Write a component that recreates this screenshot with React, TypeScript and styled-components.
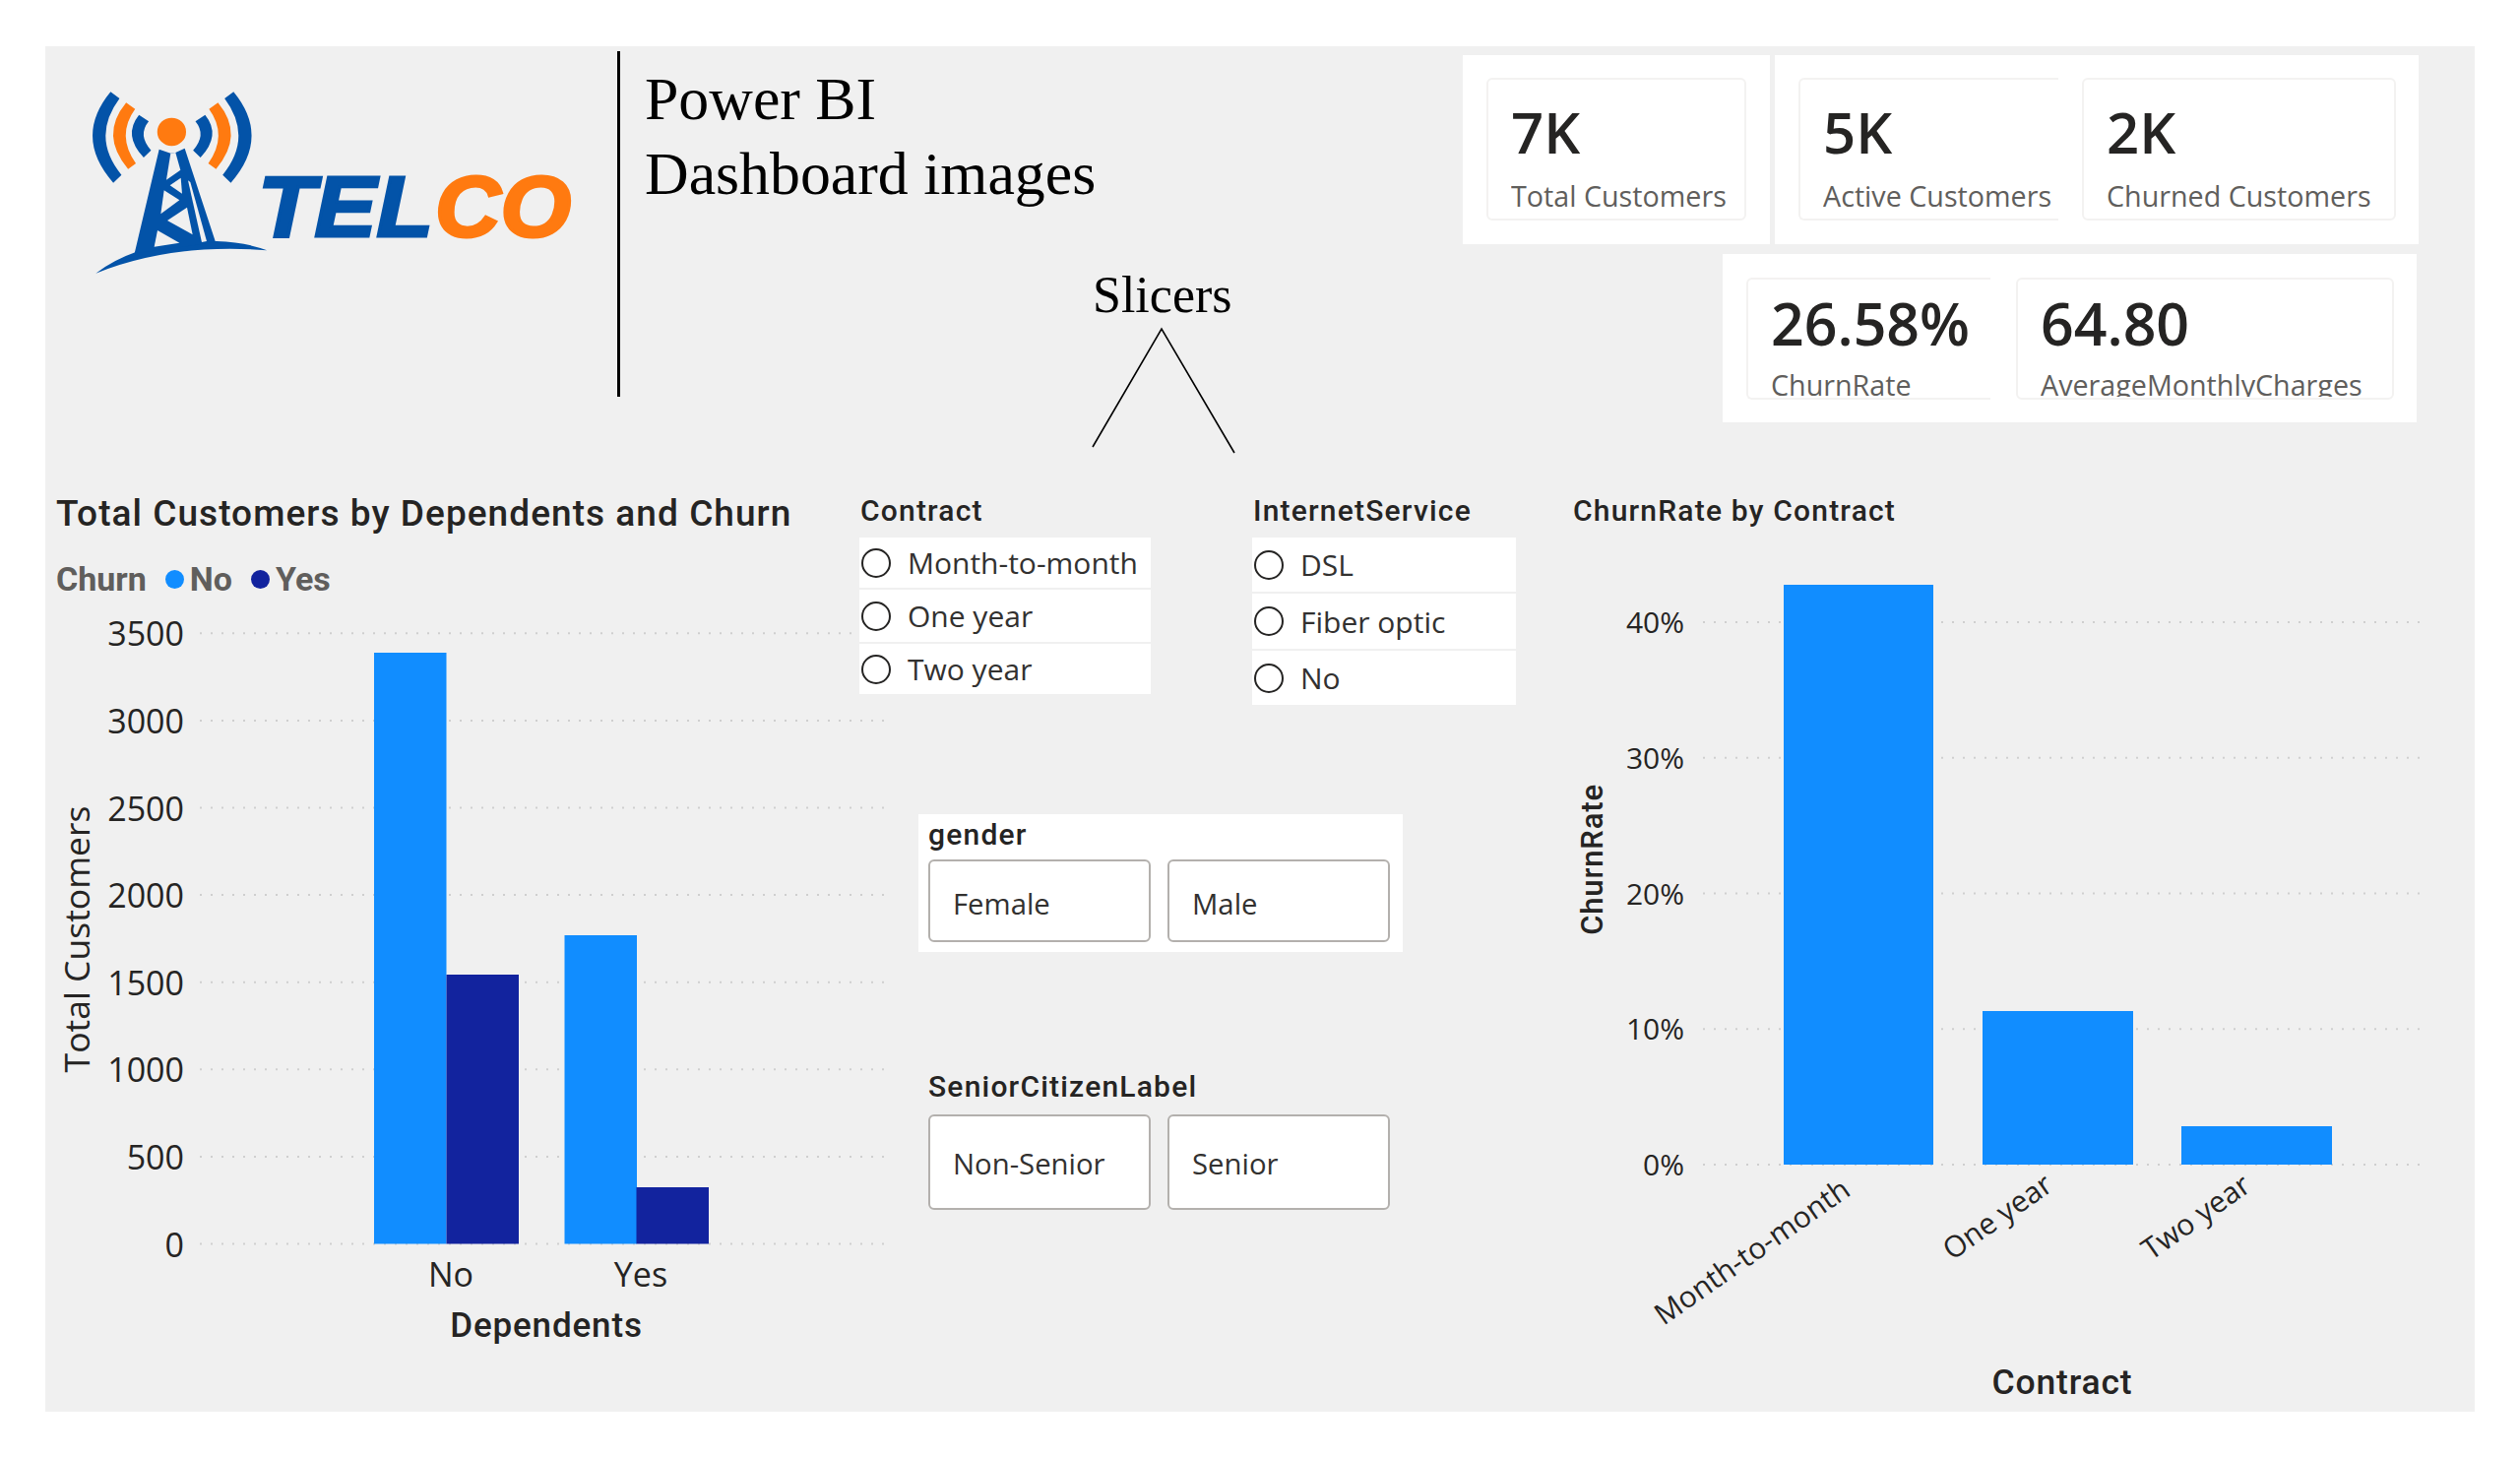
import React from "react";
import styled, { createGlobalStyle } from "styled-components";

const Global = createGlobalStyle`
  html, body { margin: 0; padding: 0; background: #ffffff; }
  #root { width: 2560px; height: 1480px; overflow: hidden; }
`;

const UI = `"Open Sans", "Noto Sans", sans-serif`;
const DIN = `Roboto, "Liberation Sans", sans-serif`;
const SERIF = `"Liberation Serif", serif`;

const Canvas = styled.main`
  width: 2468px;
  height: 1387px;
  margin: 47px 46px 0;
  background: #f0f0f0;
  display: flex;
  flex-direction: column;
`;
const TopRow = styled.header`
  height: 433px;
  display: flex;
  flex: none;
`;
const LogoSvg = styled.svg`
  display: block;
  width: 500px;
  height: 200px;
  margin: 41px 0 0 44px;
  flex: none;
`;
const Divider = styled.div`
  width: 3px;
  height: 351px;
  margin: 5px 0 0 37px;
  background: #000;
  flex: none;
`;
const TitleColumn = styled.div`
  width: 831px;
  margin-left: 25px;
  padding-top: 15px;
  flex: none;
  box-sizing: border-box;
  display: flex;
  flex-direction: column;
  font-family: ${SERIF};
  color: #000;
`;
const Headline = styled.h1`
  margin: 0;
  font-size: 61.8px;
  line-height: 76px;
  font-weight: 400;
`;
const SlicerNote = styled.div`
  margin: 56px 0 0 449px;
  width: 155px;
  display: flex;
  flex-direction: column;
  align-items: flex-start;
`;
const SlicerWord = styled.div`
  font-size: 52px;
  line-height: 60px;
  margin-left: 6px;
`;
const Fork = styled.svg`
  display: block;
  width: 155px;
  height: 134px;
`;

const KpiColumn = styled.div`
  padding-top: 9px;
  display: flex;
  flex-direction: column;
  gap: 10px;
`;
const KpiRow = styled.div`
  display: flex;
  gap: 5px;
`;
const KpiPanel = styled.section<{ $w: number; $h: number; $left?: number; $pad: number; $gap: number; $top: number }>`
  width: ${(p) => p.$w}px;
  height: ${(p) => p.$h}px;
  margin-left: ${(p) => p.$left ?? 0}px;
  background: #fff;
  box-sizing: border-box;
  padding: ${(p) => p.$top}px 0 0 ${(p) => p.$pad}px;
  display: flex;
  gap: ${(p) => p.$gap}px;
  align-items: flex-start;
`;
const Card = styled.div<{ $w: number; $h: number; $open?: boolean; $top: number }>`
  width: ${(p) => p.$w}px;
  height: ${(p) => p.$h}px;
  box-sizing: border-box;
  flex: none;
  padding: ${(p) => p.$top}px 0 0 23px;
  border: 2px solid #f3f2f1;
  border-right: ${(p) => (p.$open ? "none" : "2px solid #f3f2f1")};
  border-radius: ${(p) => (p.$open ? "6px 0 0 6px" : "6px")};
  overflow: hidden;
  white-space: nowrap;
`;
const Value = styled.div<{ $size: number }>`
  font-family: ${UI};
  font-weight: 600;
  font-size: ${(p) => p.$size}px;
  line-height: 64px;
  color: #252423;
`;
const KpiLabel = styled.div<{ $gap: number; $clip?: boolean }>`
  font-family: ${UI};
  font-size: 28.7px;
  line-height: 40px;
  margin-top: ${(p) => p.$gap}px;
  color: #605e5c;
  height: ${(p) => (p.$clip ? "32px" : "40px")};
  overflow: hidden;
`;

const BottomRow = styled.div`
  flex: 1;
  display: flex;
  min-height: 0;
`;
const ChartColumn = styled.section`
  width: 827px;
  flex: none;
  padding-top: 19px;
  box-sizing: border-box;
`;
const ChartTitle = styled.h2`
  margin: 0 0 0 11px;
  font-family: ${DIN};
  font-size: 37px;
  line-height: 46px;
  font-weight: 500;
  letter-spacing: 1.05px;
  color: #252423;
  white-space: nowrap;
`;
const Legend = styled.div`
  margin: 23px 0 12px 11px;
  height: 40px;
  display: flex;
  align-items: center;
  font-family: ${DIN};
  font-weight: 700;
  font-size: 34px;
  color: #605e5c;
`;
const LegendName = styled.span`
  margin-right: 19px;
`;
const LegendDot = styled.span<{ $color: string }>`
  width: 19px;
  height: 19px;
  border-radius: 50%;
  background: ${(p) => p.$color};
  margin-right: 6px;
  flex: none;
`;
const LegendItem = styled.span`
  margin-right: 19px;
`;
const ChartSvg = styled.svg<{ $w: number; $h: number }>`
  display: block;
  width: ${(p) => p.$w}px;
  height: ${(p) => p.$h}px;
  overflow: visible;
  text { font-family: ${UI}; fill: #252423; }
  .din { font-family: ${DIN}; font-weight: 500; letter-spacing: 0.85px; }
`;

const SlicerColumn = styled.section`
  width: 667px;
  flex: none;
  position: relative;
  padding-top: 19px;
  box-sizing: border-box;
`;
const ListRow = styled.div`
  display: flex;
  gap: 103px;
`;
const ListSlicer = styled.div<{ $w: number }>`
  width: ${(p) => p.$w}px;
`;
const SlicerTitle = styled.div`
  font-family: ${DIN};
  font-size: 30px;
  line-height: 40px;
  font-weight: 500;
  letter-spacing: 1.2px;
  color: #252423;
  margin: 0 0 7px 1px;
`;
const OptionList = styled.div`
  display: flex;
  flex-direction: column;
  gap: 2px;
`;
const Option = styled.div<{ $h: number }>`
  height: ${(p) => p.$h}px;
  background: #fff;
  display: flex;
  align-items: center;
  padding-left: 2px;
  font-family: ${UI};
  font-size: 30px;
  color: #323130;
`;
const Radio = styled.span`
  width: 26px;
  height: 26px;
  border: 2px solid #252423;
  border-radius: 50%;
  margin-right: 17px;
  flex: none;
`;
const GenderPanel = styled.div`
  margin: 111px 0 0 60px;
  width: 492px;
  height: 140px;
  background: #fff;
  box-sizing: border-box;
  padding: 3px 0 0 10px;
`;
const SeniorBlock = styled.div`
  margin: 119px 0 0 70px;
`;
const ButtonTitle = styled.div<{ $gap: number }>`
  font-family: ${DIN};
  font-size: 30px;
  line-height: 36px;
  font-weight: 500;
  letter-spacing: 1.2px;
  color: #252423;
  margin-bottom: ${(p) => p.$gap}px;
`;
const ButtonRow = styled.div`
  display: flex;
  gap: 17px;
`;
const ToggleButton = styled.div<{ $h: number; $drop: number }>`
  width: 226px;
  height: ${(p) => p.$h}px;
  box-sizing: border-box;
  background: #fff;
  border: 2px solid #b3b0ad;
  border-radius: 6px;
  display: flex;
  align-items: center;
  padding: ${(p) => p.$drop}px 0 0 23px;
  font-family: ${UI};
  font-size: 29.3px;
  color: #323130;
`;

const ChurnColumn = styled.section`
  flex: 1;
  min-width: 0;
  padding-top: 19px;
  box-sizing: border-box;
`;
const ChurnTitle = styled.h2`
  margin: 0 0 1px 58px;
  font-family: ${DIN};
  font-size: 30px;
  line-height: 40px;
  font-weight: 500;
  letter-spacing: 1.2px;
  color: #252423;
`;

const GRID = "#cfcfcf";
const BLUE = "#118dff";
const NAVY = "#12239e";

function Logo() {
  const arcs = (
    <>
      <path fill="#0353a8" d="M183 160 Q87 298 190 437 L211 413 Q132 298 206 180 Z" />
      <path fill="#ff7a10" d="M223 193 Q154 292 228 395 L248 378 Q197 292 246 212 Z" />
      <path fill="#0353a8" d="M256 230 Q214 292 268 360 L287 338 Q252 292 281 250 Z" />
    </>
  );
  return (
    <LogoSvg viewBox="90 88 500 200" aria-label="Telco logo">
      <g transform="translate(40 40) scale(0.3953 0.3333)">
        {arcs}
        <g transform="translate(682 0) scale(-1 1)">{arcs}</g>
        <ellipse cx="340" cy="282" rx="37" ry="43" fill="#ff7a10" />
        <path
          fill="#0353a8"
          d="M145 713 Q190 672 248 648 L300 632 L360 617 L455 615 Q530 618 585 643 Q340 620 145 713 Z"
        />
      </g>
      <g transform="translate(125 140) scale(0.3333)">
        <path fill="#0353a8" d="M110 35 L145 47 L160 45 L188 32 L282 318 L200 330 L35 352 Z" />
        <g fill="#f0f0f0">
          <path d="M145 47 L160 45 L175 98 L132 128 Z" />
          <path d="M176 122 L143 145 L180 170 Z" />
          <path d="M125 160 L172 190 L115 232 Z" />
          <path d="M195 212 L135 252 L212 295 Z" />
          <path d="M105 282 L172 320 L95 332 Z" />
          <path d="M198 130 L205 135 L255 315 L240 318 Z" />
        </g>
      </g>
      <g fontFamily='"Liberation Sans", sans-serif' fontWeight="700" fontStyle="italic" fontSize="87">
        <text x="262" y="240" fill="#0353a8" stroke="#0353a8" strokeWidth="3" textLength="178" lengthAdjust="spacingAndGlyphs">
          TEL
        </text>
        <text x="442" y="240" fill="#ff7a10" stroke="#ff7a10" strokeWidth="3" textLength="138" lengthAdjust="spacingAndGlyphs">
          CO
        </text>
      </g>
    </LogoSvg>
  );
}

const depTicks = [0, 500, 1000, 1500, 2000, 2500, 3000, 3500];
const depBars = [
  { x: 380, top: 663, fill: BLUE },
  { x: 453.5, top: 990, fill: NAVY },
  { x: 573.5, top: 950, fill: BLUE },
  { x: 646.5, top: 1206, fill: NAVY },
];

function DependentsChart() {
  return (
    <ChartSvg $w={827} $h={770} viewBox="46 620 827 770">
      {depTicks.map((t, i) => {
        const y = 1263.5 - i * 88.6;
        return (
          <g key={t}>
            <line x1="203" x2="905" y1={y} y2={y} stroke={GRID} strokeWidth="2" strokeDasharray="2 9" />
            <text x="187" y={y + 13} fontSize="34" textAnchor="end">{t}</text>
          </g>
        );
      })}
      {depBars.map((b) => (
        <rect key={b.x} x={b.x} y={b.top} width={73.5} height={1263.5 - b.top} fill={b.fill} />
      ))}
      <text x="458" y="1307" fontSize="34" textAnchor="middle">No</text>
      <text x="651" y="1307" fontSize="34" textAnchor="middle">Yes</text>
      <text className="din" x="555" y="1358" fontSize="35" textAnchor="middle">Dependents</text>
      <text transform="translate(91 954) rotate(-90)" fontSize="35.5" textAnchor="middle">Total Customers</text>
    </ChartSvg>
  );
}

const churnTicks = ["0%", "10%", "20%", "30%", "40%"];
const churnBars = [
  { x: 1812, top: 594, w: 152 },
  { x: 2014, top: 1027, w: 153 },
  { x: 2216, top: 1144, w: 153 },
];
const churnLabels = [
  { x: 1690, y: 1347, text: "Month-to-month" },
  { x: 1983, y: 1281, text: "One year" },
  { x: 2185, y: 1281, text: "Two year" },
];

function ChurnChart() {
  return (
    <ChartSvg $w={974} $h={890} viewBox="1540 540 974 890">
      {churnTicks.map((t, i) => {
        const y = 1183 - i * 137.75;
        return (
          <g key={t}>
            <line x1="1730" x2="2462" y1={y} y2={y} stroke={GRID} strokeWidth="2" strokeDasharray="2 9" />
            <text x="1711" y={y + 11} fontSize="30" textAnchor="end">{t}</text>
          </g>
        );
      })}
      {churnBars.map((b) => (
        <rect key={b.x} x={b.x} y={b.top} width={b.w} height={1183 - b.top} fill={BLUE} />
      ))}
      {churnLabels.map((l) => (
        <text key={l.text} transform={`translate(${l.x} ${l.y}) rotate(-35)`} fontSize="30">{l.text}</text>
      ))}
      <text className="din" transform="translate(1628 873) rotate(-90)" fontSize="31" textAnchor="middle">ChurnRate</text>
      <text className="din" x="2095" y="1416" fontSize="35.5" textAnchor="middle">Contract</text>
    </ChartSvg>
  );
}

export default function App() {
  return (
    <>
      <Global />
      <Canvas>
        <TopRow>
          <Logo />
          <Divider />
          <TitleColumn>
            <Headline>Power BI<br />Dashboard images</Headline>
            <SlicerNote>
              <SlicerWord>Slicers</SlicerWord>
              <Fork viewBox="1105 330 155 134">
                <path d="M1111 454 L1181 334 L1255 460" fill="none" stroke="#000" strokeWidth="1.6" />
              </Fork>
            </SlicerNote>
          </TitleColumn>
          <KpiColumn>
            <KpiRow>
              <KpiPanel $w={312} $h={192} $pad={24} $gap={0} $top={23}>
                <Card $w={264} $h={145} $top={21}>
                  <Value $size={58}>7K</Value>
                  <KpiLabel $gap={13}>Total Customers</KpiLabel>
                </Card>
              </KpiPanel>
              <KpiPanel $w={654} $h={192} $pad={24} $gap={24} $top={23}>
                <Card $w={264} $h={145} $top={21} $open>
                  <Value $size={58}>5K</Value>
                  <KpiLabel $gap={13}>Active Customers</KpiLabel>
                </Card>
                <Card $w={319} $h={145} $top={21}>
                  <Value $size={58}>2K</Value>
                  <KpiLabel $gap={13}>Churned Customers</KpiLabel>
                </Card>
              </KpiPanel>
            </KpiRow>
            <KpiPanel $w={705} $h={171} $left={264} $pad={24} $gap={26} $top={24}>
              <Card $w={248} $h={124} $top={12} $open>
                <Value $size={59}>26.58%</Value>
                <KpiLabel $gap={11} $clip>ChurnRate</KpiLabel>
              </Card>
              <Card $w={384} $h={124} $top={12}>
                <Value $size={59}>64.80</Value>
                <KpiLabel $gap={11} $clip>AverageMonthlyCharges</KpiLabel>
              </Card>
            </KpiPanel>
          </KpiColumn>
        </TopRow>
        <BottomRow>
          <ChartColumn>
            <ChartTitle>Total Customers by Dependents and Churn</ChartTitle>
            <Legend>
              <LegendName>Churn</LegendName>
              <LegendDot $color={BLUE} />
              <LegendItem>No</LegendItem>
              <LegendDot $color={NAVY} />
              <LegendItem>Yes</LegendItem>
            </Legend>
            <DependentsChart />
          </ChartColumn>
          <SlicerColumn>
            <ListRow>
              <ListSlicer $w={296}>
                <SlicerTitle>Contract</SlicerTitle>
                <OptionList>
                  <Option $h={51}><Radio />Month-to-month</Option>
                  <Option $h={53}><Radio />One year</Option>
                  <Option $h={51}><Radio />Two year</Option>
                </OptionList>
              </ListSlicer>
              <ListSlicer $w={268}>
                <SlicerTitle>InternetService</SlicerTitle>
                <OptionList>
                  <Option $h={55}><Radio />DSL</Option>
                  <Option $h={56}><Radio />Fiber optic</Option>
                  <Option $h={55}><Radio />No</Option>
                </OptionList>
              </ListSlicer>
            </ListRow>
            <GenderPanel>
              <ButtonTitle $gap={7}>gender</ButtonTitle>
              <ButtonRow>
                <ToggleButton $h={84} $drop={6}>Female</ToggleButton>
                <ToggleButton $h={84} $drop={6}>Male</ToggleButton>
              </ButtonRow>
            </GenderPanel>
            <SeniorBlock>
              <ButtonTitle $gap={10}>SeniorCitizenLabel</ButtonTitle>
              <ButtonRow>
                <ToggleButton $h={97} $drop={2}>Non-Senior</ToggleButton>
                <ToggleButton $h={97} $drop={2}>Senior</ToggleButton>
              </ButtonRow>
            </SeniorBlock>
          </SlicerColumn>
          <ChurnColumn>
            <ChurnTitle>ChurnRate by Contract</ChurnTitle>
            <ChurnChart />
          </ChurnColumn>
        </BottomRow>
      </Canvas>
    </>
  );
}
